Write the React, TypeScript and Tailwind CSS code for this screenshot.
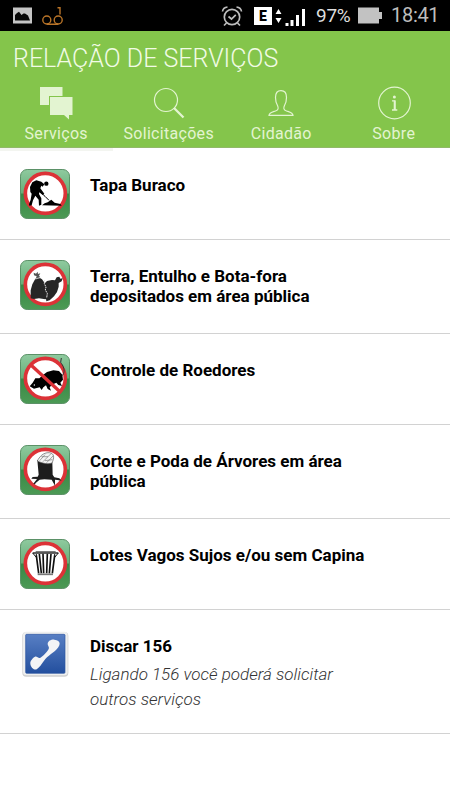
import type { ReactNode } from 'react'
import clsx from 'clsx'

interface Service {
  id: string
  title: ReactNode
  note?: ReactNode
  height: string
  icon: ReactNode
}

function Sign({ id, top, children }: { id: string; top: number; children: ReactNode }) {
  return (
    <svg viewBox={`30 ${top} 150 150`} className="h-[50px] w-[50px]">
      <defs>
        <linearGradient id={`top-${id}`} x1="0" y1="0" x2="0" y2="1">
          <stop offset="0" stopColor="#8fca9f" />
          <stop offset="0.48" stopColor="#68ae78" />
          <stop offset="0.5" stopColor="#398846" />
          <stop offset="1" stopColor="#4c9a55" />
        </linearGradient>
      </defs>
      <rect x="31.5" y={top + 1.5} width="147" height="147" rx="20" fill={`url(#top-${id})`} stroke="#5b9167" strokeWidth="3" />
      <circle cx="106" cy={top + 73} r="60" fill="#fff" stroke="#dc3237" strokeWidth="11" />
      {children}
    </svg>
  )
}

function PhoneIcon() {
  return (
    <svg viewBox="36 30 141 138" className="mt-px ml-0.5 h-[46px] w-[47px]">
      <defs>
        <linearGradient id="phone" x1="0" y1="0" x2="0" y2="1">
          <stop offset="0" stopColor="#587fc4" />
          <stop offset="1" stopColor="#234f9e" />
        </linearGradient>
      </defs>
      <rect x="37" y="33" width="138" height="134" rx="12" fill="#cfcfcf" />
      <rect x="39" y="32" width="134" height="131" rx="10" fill="#eeefef" />
      <rect x="47" y="40" width="118" height="117" rx="3" fill="url(#phone)" stroke="#2c55a0" strokeWidth="2" />
      <path
        d="M61 128C60 121 67 111 75 107C81 105 85 113 90 111C99 106 111 94 116 84C119 77 113 75 113 68C114 60 124 55 133 56C143 57 149 61 149 68C147 85 126 95 111 109C99 121 91 139 80 145C72 148 62 139 61 128Z"
        fill="#f3f4f6"
      />
    </svg>
  )
}

const services: Service[] = [
  {
    id: 'buraco',
    title: 'Tapa Buraco',
    height: 'h-[92px] pt-[21px]',
    icon: (
      <Sign id="buraco" top={27}>
        <circle cx="109" cy="71" r="6.5" />
        <path d="M67 67L79 61L94 65L103 73L98 80L94 77L91 85L103 101L98 105L88 97L87 102L94 115L94 134L87 137L86 119L76 107L69 121L65 136L58 137L57 133L62 119L65 101L61 96L60 81Z" />
        <path d="M96 136L104 130L113 127L124 119L134 128L151 132L155 137Z" />
        <path d="M86 91L105 109L117 121" fill="none" stroke="#000" strokeWidth="3" />
      </Sign>
    ),
  },
  {
    id: 'entulho',
    title: <>Terra, Entulho e Bota-fora<br />depositados em área pública</>,
    height: 'h-[94px] pt-5',
    icon: (
      <Sign id="entulho" top={30}>
        <g fill="#262626">
          <path d="M102 102L111 93L126 90L135 91L140 82L148 80L151 86L158 85L155 94L146 99L146 110L141 126L132 139L119 151L109 154Z" />
          <path d="M62 145L62 121L67 103L76 86L86 82L96 88L104 99L107 110L116 131L116 144L106 148L87 145L72 147Z" />
          <path d="M71 68L78 71L83 65L84 72L91 70L87 77L91 82L77 86L80 79L72 76Z" fill="#555" />
        </g>
        <path d="M104 90L103 101L108 111L106 120L112 130L110 144" fill="none" stroke="#e8e8e8" strokeWidth="3" strokeDasharray="5 2" />
        <path d="M76 87L91 83" stroke="#fff" strokeWidth="2" />
      </Sign>
    ),
  },
  {
    id: 'roedores',
    title: 'Controle de Roedores',
    height: 'h-[91px] pt-5',
    icon: (
      <Sign id="roedores" top={33}>
        <path d="M59 130L68 119L76 106L88 106L99 96L111 87L130 82L147 84L157 95L159 110L151 119L156 129L145 126L139 119L126 125L119 133L123 143L113 138L108 127L100 133L95 141L89 133L72 137Z" />
        <path d="M157 98C169 82 158 67 152 58L154 45" fill="none" stroke="#333" strokeWidth="3" />
        <path d="M62 65L150 146" stroke="#dc3237" strokeWidth="10" />
        <circle cx="73" cy="126" r="2" fill="#fff" />
      </Sign>
    ),
  },
  {
    id: 'poda',
    title: <>Corte e Poda de Árvores em área<br />pública</>,
    height: 'h-[94px] pt-5',
    icon: (
      <Sign id="poda" top={30}>
        <path d="M82 75L127 82L128 119L133 127L148 130L155 137L142 135L135 134L135 152L125 134L103 133L89 134L77 144L75 148L70 146L81 132L64 131L68 126L83 125L86 119Z" fill="#1d1d1d" />
        <path d="M82 78C88 66 99 52 118 53C134 55 133 69 126 84C114 88 100 86 82 78Z" fill="#f4f4f4" stroke="#555" strokeWidth="2" />
        <path d="M89 77L105 59M99 80L123 56M110 83L129 63M94 65L114 65M105 77L127 74" stroke="#777" strokeWidth="2" />
      </Sign>
    ),
  },
  {
    id: 'lotes',
    title: 'Lotes Vagos Sujos e/ou sem Capina',
    height: 'h-[91px] pt-5',
    icon: (
      <Sign id="lotes" top={28}>
        <g fill="none" stroke="#111">
          <path d="M68 70H145" strokeWidth="4" />
          <path d="M77 66H137" strokeWidth="2" />
          <path d="M68 70L79 83V73M145 70L134 83V73" strokeWidth="3" />
          <path d="M79 77L86 131M88 73L94 131M99 72L101 131M112 72L110 131M123 73L118 131M134 77L127 131" strokeWidth="5" />
          <path d="M83 134H129" stroke="#777" strokeWidth="5" />
        </g>
      </Sign>
    ),
  },
  {
    id: 'discar',
    title: 'Discar 156',
    note: <>Ligando 156 você poderá solicitar<br />outros serviços</>,
    height: 'h-[124px] pt-5',
    icon: <PhoneIcon />,
  },
]

const tabs = [
  {
    label: 'Serviços',
    icon: (
      <svg viewBox="0 0 36 36" className="h-9 w-9" fill="#e3f4d1">
        <path d="M2 3H24.5V12H11V21H2Z" />
        <path d="M12 13H34.5V31H31V35.5L26 31H12Z" />
      </svg>
    ),
  },
  {
    label: 'Solicitações',
    icon: (
      <svg viewBox="0 0 36 36" className="h-9 w-9" fill="none" stroke="#e3f4d1">
        <circle cx="15" cy="16" r="11.5" strokeWidth="1.2" />
        <path d="M23 24L32.5 33.5" strokeWidth="2.3" />
      </svg>
    ),
  },
  {
    label: 'Cidadão',
    icon: (
      <svg viewBox="0 0 36 36" className="h-9 w-9" fill="none" stroke="#e3f4d1" strokeWidth="1.2">
        <path d="M6 31.4C6.2 28.5 9.5 28 12.5 27C15.5 26 15.7 24 14.5 21.5C13 19 12.5 16 12.5 13.5C12.5 9 14.5 6.7 18 6.7S23.5 9 23.5 13.5C23.5 16 23 19 21.5 21.5C20.3 24 20.5 26 23.5 27C26.5 28 29.8 28.5 30 31.4Z" />
      </svg>
    ),
  },
  {
    label: 'Sobre',
    icon: (
      <svg viewBox="0 0 36 36" className="h-9 w-9" fill="none" stroke="#e3f4d1">
        <circle cx="18.5" cy="19" r="15.8" strokeWidth="1.2" />
        <circle cx="18.4" cy="13" r="1.5" fill="#e3f4d1" stroke="none" />
        <path d="M16 16.8H18.7V25.8M16 26H21.3" strokeWidth="1.3" />
        <path d="M18.7 16.5V26" strokeWidth="2" />
      </svg>
    ),
  },
]

function StatusBar() {
  return (
    <div className="flex h-[31px] items-center bg-black text-[#bdbdbd]">
      <svg viewBox="0 0 20 17" className="ml-3 h-[17px] w-5">
        <rect x="1" y="0.5" width="19" height="16" fill="#c5c5c5" />
        <path d="M3 13.5V8L5 6L7 4.8L9.5 8L11.5 6.5H13L16 8.5L18 13.5Z" fill="#080808" />
      </svg>
      <svg viewBox="0 0 22 20" className="ml-[9px] h-5 w-[22px]" fill="none" stroke="#b97428" strokeWidth="1.4">
        <circle cx="5.8" cy="14" r="4" />
        <circle cx="17.2" cy="14" r="4" />
        <path d="M5.8 18.2H17.2M16.5 1.7H19V8.5" />
      </svg>
      <svg viewBox="0 0 22 22" className="ml-[158px] h-[22px] w-[22px]" fill="none" stroke="#bdbdbd" strokeWidth="1.7">
        <circle cx="11" cy="12" r="7.7" />
        <path d="M1.5 6.5Q2 2.5 6.5 2M15.5 2Q20 2.5 20.5 6.5M5.5 18L3 20.5M16.5 18L19 20.5M7.5 11.5L10.5 14L14.8 9.8" />
      </svg>
      <div className="ml-[11px] flex h-[18px] w-[18px] items-center justify-center bg-white font-['Roboto',sans-serif] text-sm font-black text-black">E</div>
      <svg viewBox="0 0 30 20" className="ml-[3px] h-5 w-[30px]" fill="#fff">
        <path d="M0.5 8L3.5 3L6.5 8ZM0.5 12L3.5 17L6.5 12Z" />
        <path d="M10.5 17H13.5V20H10.5ZM15.5 14H18.5V20H15.5ZM21 9H24V20H21ZM27 3H30V20H27Z" />
      </svg>
      <span className="ml-[11px] w-[38px] text-[19px] leading-[31px] tracking-[-0.3px] whitespace-nowrap text-[#dedede]">97%</span>
      <svg viewBox="0 0 24 17" className="ml-1 h-[17px] w-6" fill="#c2c2c2">
        <path d="M0 0.5H21V5H24V12H21V16.5H0Z" />
      </svg>
      <span className="ml-[9px] text-[20px] leading-[31px] tracking-[-0.3px]">18:41</span>
    </div>
  )
}

export default function App() {
  return (
    <div className="h-[800px] w-[450px] overflow-hidden bg-white font-['Roboto',sans-serif]">
      <StatusBar />

      {/* Title and tabs */}
      <header className="h-[117px] border-b border-[#91b969] bg-[#84c54b] text-[#f1fbe5]">
        <h1 className="h-[52px] pl-[13px] text-[25px] leading-[56px] font-light whitespace-nowrap">RELAÇÃO DE SERVIÇOS</h1>
        <nav className="grid h-[65px] grid-cols-4">
          {tabs.map((tab, i) => (
            <div
              key={tab.label}
              className={clsx('flex flex-col items-center border-b-[3px]', i === 0 ? 'border-[#f3f5f0]' : 'border-transparent')}
            >
              <div className="mt-px">{tab.icon}</div>
              <span className="text-[16px] leading-[28px] tracking-[0.3px] text-[#e3f4d1]">{tab.label}</span>
            </div>
          ))}
        </nav>
      </header>

      {/* Service list */}
      <main>
        {services.map((s) => (
          <div key={s.id} className={clsx('flex border-b border-[#d2d2d2]', s.height)}>
            <div className="ml-5 w-[50px] shrink-0">{s.icon}</div>
            <div className="ml-5 pt-1.5 whitespace-nowrap">
              <h2 className="text-[17px] leading-5 font-bold text-black">{s.title}</h2>
              {s.note && (
                <p className="mt-1.5 text-[17px] leading-[25px] font-light text-[#333] italic">{s.note}</p>
              )}
            </div>
          </div>
        ))}
      </main>
    </div>
  )
}
